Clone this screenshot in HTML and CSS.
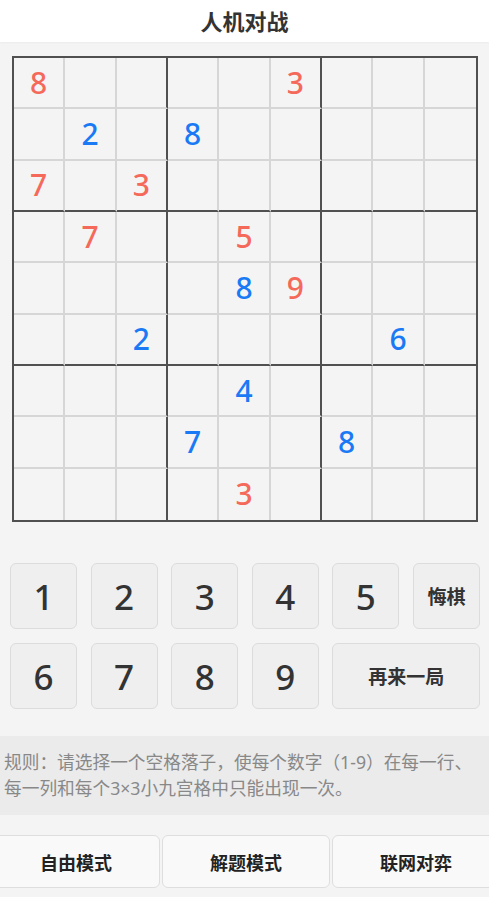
FILE: index.html
```html
<!DOCTYPE html>
<html lang="zh">
<head>
<meta charset="utf-8">
<title>人机对战</title>
<link rel="stylesheet" href="styles.css">
</head>
<body>
<header class="topbar">人机对战</header>
<main class="page">
  <div class="board">
    <div class="cell red">8</div><div class="cell"></div><div class="cell"></div><div class="cell"></div><div class="cell"></div><div class="cell red">3</div><div class="cell"></div><div class="cell"></div><div class="cell"></div>
    <div class="cell"></div><div class="cell blue">2</div><div class="cell"></div><div class="cell blue">8</div><div class="cell"></div><div class="cell"></div><div class="cell"></div><div class="cell"></div><div class="cell"></div>
    <div class="cell red">7</div><div class="cell"></div><div class="cell red">3</div><div class="cell"></div><div class="cell"></div><div class="cell"></div><div class="cell"></div><div class="cell"></div><div class="cell"></div>
    <div class="cell"></div><div class="cell red">7</div><div class="cell"></div><div class="cell"></div><div class="cell red">5</div><div class="cell"></div><div class="cell"></div><div class="cell"></div><div class="cell"></div>
    <div class="cell"></div><div class="cell"></div><div class="cell"></div><div class="cell"></div><div class="cell blue">8</div><div class="cell red">9</div><div class="cell"></div><div class="cell"></div><div class="cell"></div>
    <div class="cell"></div><div class="cell"></div><div class="cell blue">2</div><div class="cell"></div><div class="cell"></div><div class="cell"></div><div class="cell"></div><div class="cell blue">6</div><div class="cell"></div>
    <div class="cell"></div><div class="cell"></div><div class="cell"></div><div class="cell"></div><div class="cell blue">4</div><div class="cell"></div><div class="cell"></div><div class="cell"></div><div class="cell"></div>
    <div class="cell"></div><div class="cell"></div><div class="cell"></div><div class="cell blue">7</div><div class="cell"></div><div class="cell"></div><div class="cell blue">8</div><div class="cell"></div><div class="cell"></div>
    <div class="cell"></div><div class="cell"></div><div class="cell"></div><div class="cell"></div><div class="cell red">3</div><div class="cell"></div><div class="cell"></div><div class="cell"></div><div class="cell"></div>
  </div>

  <div class="pad">
    <button class="key">1</button>
    <button class="key">2</button>
    <button class="key">3</button>
    <button class="key">4</button>
    <button class="key">5</button>
    <button class="key word">悔棋</button>
    <button class="key">6</button>
    <button class="key">7</button>
    <button class="key">8</button>
    <button class="key">9</button>
    <button class="key word wide">再来一局</button>
  </div>

  <p class="rules">规则：请选择一个空格落子，使每个数字（1-9）在每一行、<br>每一列和每个3×3小九宫格中只能出现一次。</p>

  <nav class="modes">
    <button class="mode">自由模式</button>
    <button class="mode">解题模式</button>
    <button class="mode">联网对弈</button>
  </nav>
</main>
</body>
</html>
```

FILE: styles.css
```css
* { box-sizing: border-box; }
html, body {
  margin: 0;
  padding: 0;
  background: #f4f4f4;
  font-family: "Noto Sans", "Noto Sans CJK SC", sans-serif;
  overflow: hidden;
}
.topbar {
  height: 42px;
  background: #ffffff;
  text-align: center;
  font-size: 22px;
  font-weight: 700;
  line-height: 42px;
  color: #333;
  box-shadow: 0 1px 2px rgba(0,0,0,0.04);
}
.page {
  display: flex;
  flex-direction: column;
}
.board {
  margin: 14px 0 0 12px;
  width: 466px;
  height: 466px;
  display: grid;
  grid-template-columns: repeat(9, 1fr);
  grid-template-rows: repeat(9, 1fr);
  border: 2px solid #505050;
  background: #f4f4f4;
}
.cell {
  border-right: 2px solid #d6d6d6;
  border-bottom: 2px solid #d6d6d6;
  display: flex;
  align-items: center;
  justify-content: center;
  font-size: 30px;
  font-weight: 500;
  line-height: 1;
}
.cell:nth-child(9n+3), .cell:nth-child(9n+6) { border-right-color: #505050; }
.cell:nth-child(9n) { border-right: none; }
.cell:nth-child(n+19):nth-child(-n+27),
.cell:nth-child(n+46):nth-child(-n+54) { border-bottom-color: #505050; }
.cell:nth-child(n+73) { border-bottom: none; }
.red { color: #f4695a; }
.blue { color: #1a7af5; }

.pad {
  margin: 41px 9px 0 10px;
  display: grid;
  grid-template-columns: repeat(6, 1fr);
  grid-auto-rows: 66px;
  gap: 14px 13.5px;
}
.key {
  font-family: inherit;
  background: #efefef;
  border: 1px solid #dcdcdc;
  border-radius: 6px;
  font-size: 35px;
  font-weight: 500;
  color: #333;
  padding: 0;
}
.key.word {
  font-size: 19px;
  font-weight: 700;
}
.key.wide { grid-column: span 2; }

.rules {
  margin: 27px 0 0;
  height: 79px;
  background: #ebebeb;
  padding: 13px 4px 0;
  font-size: 17.7px;
  line-height: 26px;
  color: #888;
  white-space: nowrap;
}
.modes {
  margin: 20px -11px 0 -8px;
  display: flex;
  gap: 2px;
}
.mode {
  flex: 1;
  height: 53px;
  font-family: inherit;
  background: #f9f9f9;
  border: 1px solid #dedede;
  border-radius: 6px;
  font-size: 18px;
  font-weight: 700;
  color: #222;
  padding: 0;
}
```
